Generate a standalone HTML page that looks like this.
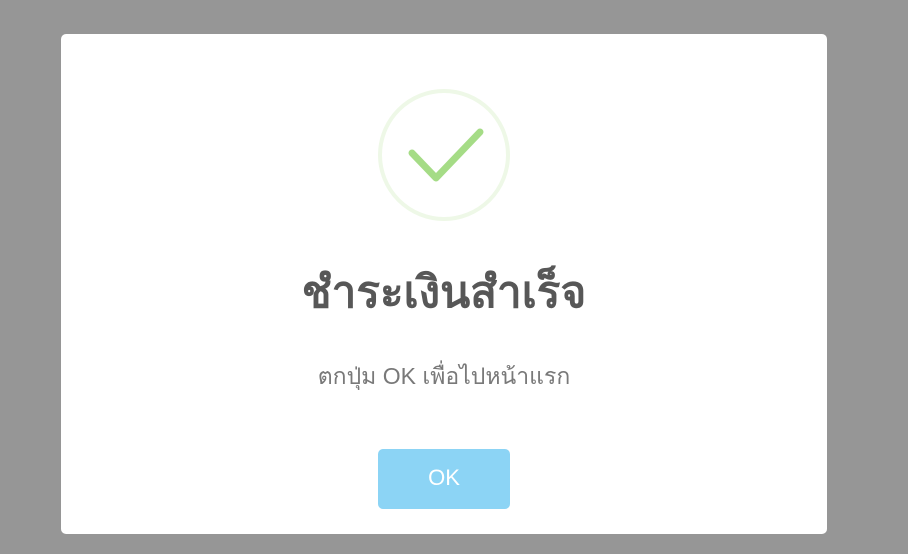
<!DOCTYPE html>
<html><head><meta charset="utf-8"><style>
body{margin:0;width:908px;height:554px;background:#969696;overflow:hidden;font-family:"Liberation Sans",sans-serif}
.m{position:absolute;left:61px;top:34px;width:766px;height:500px;background:#fff;border-radius:5px}
.t{position:absolute;left:0;width:888px;text-align:center;top:263px;font-size:44px;font-weight:bold;color:#575757;line-height:60px}
.p{position:absolute;left:0;width:888px;text-align:center;top:360px;font-size:23px;color:#797979;line-height:32px}
.b{position:absolute;left:378px;top:449px;width:132px;height:60px;background:#8CD4F5;border-radius:5px;color:#fff;font-size:22px;line-height:58px;text-align:center}
</style></head><body>
<div class="m"></div>
<svg style="position:absolute;left:0;top:0" width="908" height="554">
<circle cx="444" cy="155" r="64" fill="none" stroke="#eef8e7" stroke-width="4"/>
<path d="M412 153 L436 178 L480 132" fill="none" stroke="#a5dc86" stroke-width="7" stroke-linecap="round" stroke-linejoin="round"/>
</svg>
<div class="t">ชำระเงินสำเร็จ</div>
<div class="p">ตกปุ่ม OK เพื่อไปหน้าแรก</div>
<div class="b">OK</div>
</body></html>
